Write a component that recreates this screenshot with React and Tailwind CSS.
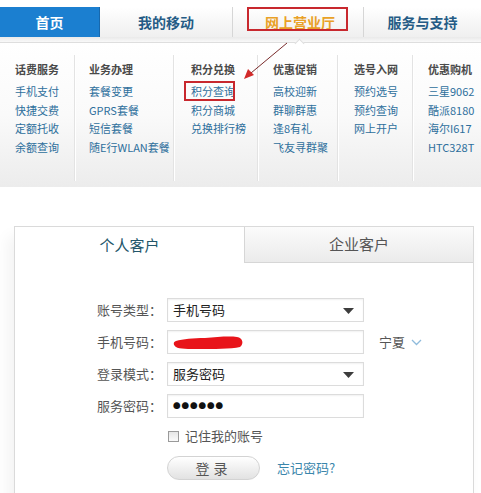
import React from 'react';

const menu = [
  { title: '话费服务', w: 'w-[74px]', pl: 'pl-[15px]', items: ['手机支付', '快捷交费', '定额托收', '余额查询'] },
  { title: '业务办理', w: 'w-[99px]', pl: 'pl-[14px]', items: ['套餐变更', 'GPRS套餐', '短信套餐', '随E行WLAN套餐'] },
  { title: '积分兑换', w: 'w-[84px]', pl: 'pl-[17px]', items: ['积分查询', '积分商城', '兑换排行榜'] },
  { title: '优惠促销', w: 'w-[80px]', pl: 'pl-[15px]', items: ['高校迎新', '群聊群惠', '逢8有礼', '飞友寻群聚'] },
  { title: '选号入网', w: 'w-[75px]', pl: 'pl-[16px]', items: ['预约选号', '预约查询', '网上开户'] },
  { title: '优惠购机', w: 'flex-1', pl: 'pl-[15px]', items: ['三星9062', '酷派8180', '海尔I617', 'HTC328T'] },
];

function Caret() {
  return (
    <svg width="11" height="6" viewBox="0 0 11 6" className="absolute right-[9px] top-[9px]">
      <path d="M0 0 L11 0 L5.5 6 Z" fill="#3d3d3d" />
    </svg>
  );
}

function Field({ label, children, extra }) {
  return (
    <div className="flex items-center h-[24px]">
      <div className="w-[148px] text-right text-[13px] text-[#555] pr-[1px]">{label}</div>
      <div className="ml-[4px] w-[197px] h-[24px] relative border border-[#dcdcdc] bg-white shadow-[inset_0_1px_2px_rgba(0,0,0,0.06)]">
        {children}
      </div>
      {extra}
    </div>
  );
}

export default function App() {
  return (
    <div className="w-[481px] h-[493px] overflow-hidden bg-white relative font-['Noto_Sans_CJK_SC','Noto_Sans',sans-serif]">
      {/* top navigation */}
      <div className="flex h-[30px] mt-[7px]">
        <div className="w-[100px] bg-[#1b7fd0] flex items-center justify-center text-white text-[14px] font-bold border-r border-[#1768ad]">
          首页
        </div>
        <div className="w-[133px] bg-gradient-to-b from-white to-[#efefef] flex items-center justify-center text-[#255c86] text-[14px] font-bold border-r border-[#d6d6d6]">
          我的移动
        </div>
        <div className="w-[131px] bg-gradient-to-b from-white to-[#efefef] relative flex items-center justify-center text-[#e9a126] text-[14px] font-bold border-r border-[#d6d6d6]">
          <span className="ml-[4px] mt-[1px]">网上营业厅</span>
          <div className="absolute left-[14px] top-0 w-[101px] h-[24px] border-2 border-[#c8282e]" />
        </div>
        <div className="flex-1 bg-gradient-to-b from-white to-[#efefef] flex items-center justify-center text-[#255c86] text-[14px] font-bold">
          服务与支持
        </div>
      </div>
      <div className="h-[6px] bg-gradient-to-b from-[#e9e9e9] to-[#f9f9f9] border-b border-[#dedede] relative">
        <div className="absolute left-[296px] top-[3px] w-[7px] h-[7px] rotate-45 bg-white border-l border-t border-[#dedede]" />
      </div>

      {/* dropdown panel */}
      <div className="h-[144px] bg-gradient-to-b from-white via-[#fafafa] to-[#ececec] flex pt-[12px] pb-[6px]">
        {menu.map((col, i) => (
          <div
            key={col.title}
            className={`${col.w} ${col.pl} pt-[5px] ${i > 0 ? 'border-l border-[#e3e3e3] shadow-[inset_1px_0_0_#ffffff]' : ''}`}
          >
            <div className="text-[11px] leading-[18px] font-bold text-[#4a4a4a] whitespace-nowrap">{col.title}</div>
            <div className="mt-[4px]">
              {col.items.map((it) => (
                <div key={it} className="text-[11px] leading-[18.5px] text-[#2e6f9c] whitespace-nowrap">
                  {it === '积分查询' ? (
                    <span className="relative inline-block">
                      {it}
                      <span className="absolute -left-[7px] -top-[1px] w-[51px] h-[20px] border-2 border-[#c8282e]" />
                    </span>
                  ) : (
                    it
                  )}
                </div>
              ))}
            </div>
          </div>
        ))}
      </div>

      {/* annotation arrow */}
      <svg className="absolute left-0 top-0 pointer-events-none" width="481" height="120">
        <line x1="287" y1="43" x2="251" y2="73" stroke="#7a2b2b" strokeWidth="1" />
        <path d="M244 79 L248 69 L254 75 Z" fill="#d22a2a" />
      </svg>

      {/* login box */}
      <div className="mt-[39px] ml-[14px] mr-[7px] border border-[#dadada] h-[300px] shadow-[-6px_10px_14px_rgba(0,0,0,0.05)]">
        <div className="flex h-[36px]">
          <div className="w-[229px] flex items-center justify-center text-[15px] text-[#23566a]">个人客户</div>
          <div className="flex-1 flex items-center justify-center text-[15px] text-[#555] bg-gradient-to-b from-[#fbfbfb] to-[#ebebeb] border-l border-b border-[#d6d6d6]">
            企业客户
          </div>
        </div>

        <div className="pt-[35px] flex flex-col gap-[8px]">
          <Field label="账号类型：">
            <div className="pl-[5px] leading-[22px] text-[13px] text-[#222]">手机号码</div>
            <Caret />
          </Field>
          <Field
            label="手机号码："
            extra={
              <div className="ml-[15px] flex items-center text-[13px] text-[#555]">
                宁夏
                <svg width="11" height="7" viewBox="0 0 11 7" className="ml-[6px]">
                  <path d="M1 1 L5.5 5.5 L10 1" fill="none" stroke="#8fbbdc" strokeWidth="1.3" />
                </svg>
              </div>
            }
          >
            <svg width="72" height="16" viewBox="0 0 72 16" className="absolute left-[5px] top-[4px]">
              <path
                d="M3 6 C10 4 20 3 32 3 C44 2 56 1 64 2 C70 3 71 9 67 12 C58 14 40 14 26 14 C16 14 6 14 3 12 C0 10 0 7 3 6 Z"
                fill="#e8141a"
              />
            </svg>
          </Field>
          <Field label="登录模式：">
            <div className="pl-[5px] leading-[22px] text-[13px] text-[#222]">服务密码</div>
            <Caret />
          </Field>
          <Field label="服务密码：">
            <div className="pl-[5px] leading-[22px] text-[7.5px] tracking-[1px] text-[#111]">●●●●●●</div>
          </Field>
        </div>

        <div className="flex items-center mt-[11px] h-[14px]">
          <div className="ml-[153px] w-[11px] h-[11px] border border-[#9a9a9a] bg-gradient-to-b from-[#e6e6e6] to-[#fafafa]" />
          <span className="ml-[6px] text-[13px] text-[#555]">记住我的账号</span>
        </div>

        <div className="flex items-center mt-[13px]">
          <div className="ml-[152px] w-[93px] h-[24px] rounded-full border border-[#d3d3d3] bg-gradient-to-b from-white to-[#e2e2e2] flex items-center justify-center text-[14px] text-[#555] tracking-[4px]">
            登录
          </div>
          <span className="ml-[17px] text-[13px] text-[#3a86ab]">忘记密码?</span>
        </div>
      </div>
    </div>
  );
}
